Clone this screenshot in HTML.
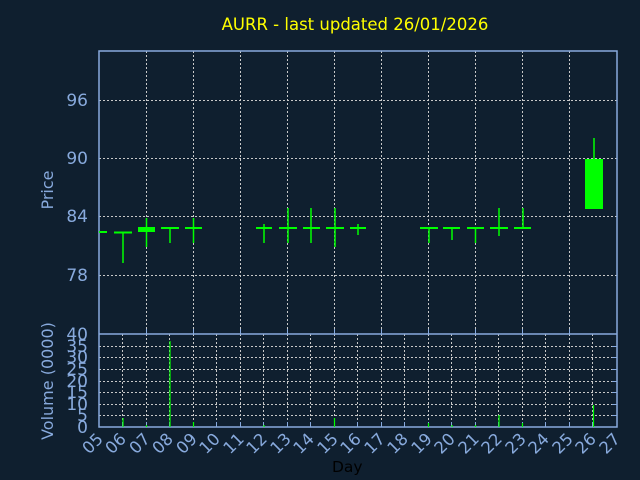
<!DOCTYPE html><html><head><style>body{margin:0;background:#0f1f2f}svg{display:block}</style></head><body>
<svg width="640" height="480" xmlns="http://www.w3.org/2000/svg" font-family="DejaVu Sans, Liberation Sans, sans-serif">
<rect width="640" height="480" fill="#0f1f2f"/>
<text x="355" y="30" fill="#ffff00" font-size="16.5" text-anchor="middle">AURR - last updated 26/01/2026</text>
<g stroke="#c8c8c8" stroke-dasharray="2,2" stroke-width="1">
<line x1="99" y1="100.5" x2="617" y2="100.5"/><line x1="99" y1="158.5" x2="617" y2="158.5"/><line x1="99" y1="216.5" x2="617" y2="216.5"/><line x1="99" y1="275.5" x2="617" y2="275.5"/>
<path d="M146.5 51V334M193.5 51V334M240.5 51V334M287.5 51V334M334.5 51V334M381.5 51V334M428.5 51V334M475.5 51V334M522.5 51V334M569.5 51V334"/>
<path d="M99 346.5H617M99 357.5H617M99 369.5H617M99 381.5H617M99 392.5H617M99 404.5H617M99 415.5H617"/>
<path d="M122.5 334V427M146.5 334V427M169.5 334V427M193.5 334V427M216.5 334V427M240.5 334V427M263.5 334V427M287.5 334V427M310.5 334V427M334.5 334V427M357.5 334V427M381.5 334V427M404.5 334V427M428.5 334V427M451.5 334V427M475.5 334V427M498.5 334V427M522.5 334V427M545.5 334V427M569.5 334V427M592.5 334V427"/>
</g>
<g stroke="#88aadd" stroke-width="1.5" fill="none">
<rect x="99" y="51" width="518" height="376"/>
<line x1="99" y1="334" x2="617" y2="334"/>
<path d="M146.5 334v-5M193.5 334v-5M240.5 334v-5M287.5 334v-5M334.5 334v-5M381.5 334v-5M428.5 334v-5M475.5 334v-5M522.5 334v-5M569.5 334v-5
M122.5 427v-5M146.5 427v-5M169.5 427v-5M193.5 427v-5M216.5 427v-5M240.5 427v-5M263.5 427v-5M287.5 427v-5M310.5 427v-5M334.5 427v-5M357.5 427v-5M381.5 427v-5M404.5 427v-5M428.5 427v-5M451.5 427v-5M475.5 427v-5M498.5 427v-5M522.5 427v-5M545.5 427v-5M569.5 427v-5M592.5 427v-5
M617 346.5h-5M617 357.5h-5M617 369.5h-5M617 381.5h-5M617 392.5h-5M617 404.5h-5M617 415.5h-5" stroke-width="1"/>
</g>
<g fill="#00ff00" stroke="#00ff00" stroke-width="1.5">
<rect x="99" y="231" width="8" height="2" stroke="none"/>
<rect x="114" y="231.5" width="18" height="2" stroke="none"/><line x1="123" y1="232" x2="123" y2="263"/>
<rect x="138" y="227" width="17" height="5" stroke="none"/><line x1="146.5" y1="218" x2="146.5" y2="247"/>
<rect x="161" y="227" width="18" height="2" stroke="none"/><line x1="170" y1="228" x2="170" y2="243"/>
<rect x="185" y="227" width="17" height="2" stroke="none"/><line x1="193.5" y1="218" x2="193.5" y2="243"/>
<rect x="256" y="227" width="16" height="2" stroke="none"/><line x1="264" y1="224" x2="264" y2="243"/>
<rect x="279" y="227" width="18" height="2" stroke="none"/><line x1="288" y1="208" x2="288" y2="243"/>
<rect x="303" y="227" width="17" height="2" stroke="none"/><line x1="311" y1="208" x2="311" y2="243"/>
<rect x="326" y="227" width="18" height="2" stroke="none"/><line x1="335" y1="208" x2="335" y2="247"/>
<rect x="350" y="227" width="16" height="2" stroke="none"/><line x1="358" y1="224" x2="358" y2="235"/>
<rect x="420" y="227" width="18" height="2" stroke="none"/><line x1="429" y1="228" x2="429" y2="243"/>
<rect x="443" y="227" width="17" height="2" stroke="none"/><line x1="452" y1="228" x2="452" y2="240"/>
<rect x="467" y="227" width="17" height="2" stroke="none"/><line x1="475.5" y1="228" x2="475.5" y2="243"/>
<rect x="490" y="227" width="18" height="2" stroke="none"/><line x1="499" y1="208" x2="499" y2="236"/>
<rect x="514" y="227" width="17" height="2" stroke="none"/><line x1="523" y1="208" x2="523" y2="229"/>
<rect x="585" y="159" width="18" height="50" stroke="none"/><line x1="594" y1="138" x2="594" y2="160"/>
<path d="M123 418V427M146.5 425V427M170 341V427M193.5 422V427M264 425V427M334.5 418V427M428.5 423V427M452 425V427M475.5 425V427M499 415V427M522.5 423V427M593.5 405V427" stroke-width="1.2"/>
</g>
<g fill="#88aadd" font-size="17" text-anchor="end">
<text x="88" y="106">96</text><text x="88" y="164">90</text><text x="88" y="222">84</text><text x="88" y="281">78</text>
<text x="88" y="340">40</text><text x="88" y="352">35</text><text x="88" y="363">30</text><text x="88" y="375">25</text><text x="88" y="387">20</text><text x="88" y="398">15</text><text x="88" y="410">10</text><text x="88" y="421">5</text><text x="88" y="433">0</text>
<text transform="translate(53,190) rotate(-90)" text-anchor="middle" font-size="16">Price</text>
<text transform="translate(53,381) rotate(-90)" text-anchor="middle" font-size="16">Volume (0000)</text>
</g>
<g fill="#88aadd" font-size="16.5" text-anchor="end">
<text transform="translate(104,440) rotate(-45)">05</text>
<text transform="translate(127,440) rotate(-45)">06</text>
<text transform="translate(151,440) rotate(-45)">07</text>
<text transform="translate(174,440) rotate(-45)">08</text>
<text transform="translate(198,440) rotate(-45)">09</text>
<text transform="translate(221,440) rotate(-45)">10</text>
<text transform="translate(245,440) rotate(-45)">11</text>
<text transform="translate(268,440) rotate(-45)">12</text>
<text transform="translate(292,440) rotate(-45)">13</text>
<text transform="translate(315,440) rotate(-45)">14</text>
<text transform="translate(339,440) rotate(-45)">15</text>
<text transform="translate(362,440) rotate(-45)">16</text>
<text transform="translate(386,440) rotate(-45)">17</text>
<text transform="translate(409,440) rotate(-45)">18</text>
<text transform="translate(433,440) rotate(-45)">19</text>
<text transform="translate(456,440) rotate(-45)">20</text>
<text transform="translate(480,440) rotate(-45)">21</text>
<text transform="translate(503,440) rotate(-45)">22</text>
<text transform="translate(527,440) rotate(-45)">23</text>
<text transform="translate(550,440) rotate(-45)">24</text>
<text transform="translate(574,440) rotate(-45)">25</text>
<text transform="translate(597,440) rotate(-45)">26</text>
<text transform="translate(621,440) rotate(-45)">27</text>
</g>
<text x="332" y="472" fill="#000" font-size="15.5">Day</text>
</svg>
</body></html>
